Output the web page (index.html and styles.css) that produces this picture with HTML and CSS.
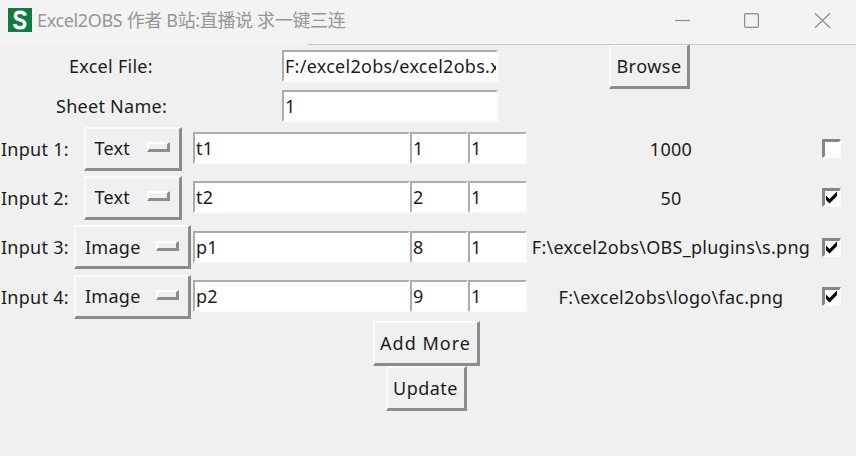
FILE: index.html
```
<!DOCTYPE html>
<html lang="zh-CN">
<head>
<meta charset="utf-8">
<title>Excel2OBS</title>
<link rel="stylesheet" href="styles.css">
</head>
<body>
<header class="titlebar">
  <svg class="logo" width="24" height="24" viewBox="0 0 24 24"><rect width="24" height="24" fill="#107c41"/><path d="M17.3 7.6C16.8 5.5 15 4.3 12.3 4.3C9.3 4.3 7.4 5.7 7.4 8C7.4 10.3 9.2 11.2 12 11.9C15 12.6 16.8 13.5 16.8 16C16.8 18.4 14.9 19.8 11.9 19.8C9 19.8 7.1 18.5 6.6 16.2" fill="none" stroke="#fff" stroke-width="3.5"/></svg>
  <h1 class="title">Excel2OBS 作者 B站:直播说 求一键三连</h1>
  <svg class="controls" width="160" height="20" viewBox="0 0 160 20" fill="none" stroke="#8c8c8c" stroke-width="1.2"><path d="M0 10.5H15"/><rect x="69.6" y="3.6" width="13.8" height="13.8" rx="1.5"/><path d="M140 3.3L155 17.7M155 3.3L140 17.7"/></svg>
</header>
<main>
  <section class="setting file">
    <span class="label">Excel File:</span>
    <div class="entry">F:/excel2obs/excel2obs.x</div>
    <div class="action"><button class="button browse">Browse</button></div>
  </section>
  <section class="setting sheet">
    <span class="label">Sheet Name:</span>
    <div class="entry">1</div>
  </section>
  <section class="inputs">
    <div class="row">
      <span class="name">Input 1:</span>
      <button class="button menu text">Text<i class="indicator"></i></button>
      <div class="entry">t1</div><div class="entry">1</div><div class="entry">1</div>
      <span class="value">1000</span>
      <span class="check"></span>
    </div>
    <div class="row">
      <span class="name">Input 2:</span>
      <button class="button menu text">Text<i class="indicator"></i></button>
      <div class="entry">t2</div><div class="entry">2</div><div class="entry">1</div>
      <span class="value">50</span>
      <span class="check"><svg width="13" height="13" viewBox="0 0 13 13"><path d="M1 4.5L4.5 8L12 0.5V5L4.5 12.5L1 9Z"/></svg></span>
    </div>
    <div class="row">
      <span class="name">Input 3:</span>
      <button class="button menu image">Image<i class="indicator"></i></button>
      <div class="entry">p1</div><div class="entry">8</div><div class="entry">1</div>
      <span class="value">F:\excel2obs\OBS_plugins\s.png</span>
      <span class="check"><svg width="13" height="13" viewBox="0 0 13 13"><path d="M1 4.5L4.5 8L12 0.5V5L4.5 12.5L1 9Z"/></svg></span>
    </div>
    <div class="row">
      <span class="name">Input 4:</span>
      <button class="button menu image">Image<i class="indicator"></i></button>
      <div class="entry">p2</div><div class="entry">9</div><div class="entry">1</div>
      <span class="value">F:\excel2obs\logo\fac.png</span>
      <span class="check"><svg width="13" height="13" viewBox="0 0 13 13"><path d="M1 4.5L4.5 8L12 0.5V5L4.5 12.5L1 9Z"/></svg></span>
    </div>
  </section>
  <footer class="actions">
    <button class="button add">Add More</button>
    <button class="button update">Update</button>
  </footer>
</main>
</body>
</html>
```
FILE: styles.css
```
* { box-sizing: border-box; }
body {
  margin: 0;
  width: 856px;
  height: 456px;
  overflow: hidden;
  background: #f0f0f0;
  color: #1c1c1c;
  font: 18px/24px "Noto Sans", "Noto Sans CJK SC", sans-serif;
  letter-spacing: 0.27px;
  white-space: nowrap;
}
.titlebar {
  display: flex;
  align-items: center;
  height: 44px;
  padding: 0 21px 4px 8px;
  background: #f3f3f3;
}
.title {
  margin: 0 0 0 5px;
  font: 400 18px/24px "Noto Sans", "Noto Sans CJK SC", sans-serif;
  letter-spacing: -0.35px;
  color: #969696;
}
.controls { margin-left: auto; }
main { position: relative; }
main::before {
  content: "";
  position: absolute;
  top: 0;
  left: 308px;
  right: 0;
  height: 1px;
  background: #c6c6c6;
}
.setting {
  display: grid;
  grid-template-columns: 282px 216px 303px;
}
.file { height: 44px; }
.sheet { height: 36px; }
.label { padding-left: 69px; padding-top: 10px; }
.sheet .label { padding-left: 56px; padding-top: 6px; }
.file .entry { margin-top: 6px; }
.sheet .entry { margin-top: 2px; }
.action { display: flex; justify-content: center; }
.entry {
  height: 32px;
  padding: 2px 0 0 1px;
  overflow: hidden;
  background: #fff;
  border: 2px solid;
  border-color: #acacac #fbfbfb #fbfbfb #acacac;
}
.button {
  height: 45px;
  padding: 0;
  font: inherit;
  letter-spacing: 0.5px;
  color: inherit;
  text-align: center;
  background: #f0f0f0;
  border: solid;
  border-width: 2px 3px 3px 2px;
  border-color: #fbfbfb #8c8c8c #8c8c8c #fbfbfb;
}
.browse { width: 81px; }
.row {
  display: grid;
  grid-template-columns: 72px 121px 217px 58px 59px 288px 1fr;
  align-items: center;
  height: 49.3px;
}
.row .entry { position: relative; top: -0.5px; }
.name { padding-left: 1px; }
.menu {
  display: flex;
  align-items: center;
  justify-content: space-between;
  justify-self: center;
  height: 44px;
  padding: 0 9px;
  letter-spacing: 0.27px;
}
.menu.text { width: 98px; }
.menu.image { width: 117px; }
.indicator {
  width: 23px;
  height: 10px;
  margin-bottom: 2px;
  border: solid;
  border-width: 2px 3px 3px 2px;
  border-color: #fff #8c8c8c #8c8c8c #fff;
}
.value { text-align: center; }
.check {
  width: 19px;
  height: 19px;
  margin-left: 7px;
  background: #fff;
  border: solid;
  border-width: 3px 2px 2px 3px;
  border-color: #858585 #fcfcfc #fcfcfc #858585;
}
.check svg { display: block; }
.actions {
  display: flex;
  flex-direction: column;
  align-items: center;
  padding-right: 4px;
}
.add { width: 107px; letter-spacing: 1px; }
.update { width: 81px; }
```
